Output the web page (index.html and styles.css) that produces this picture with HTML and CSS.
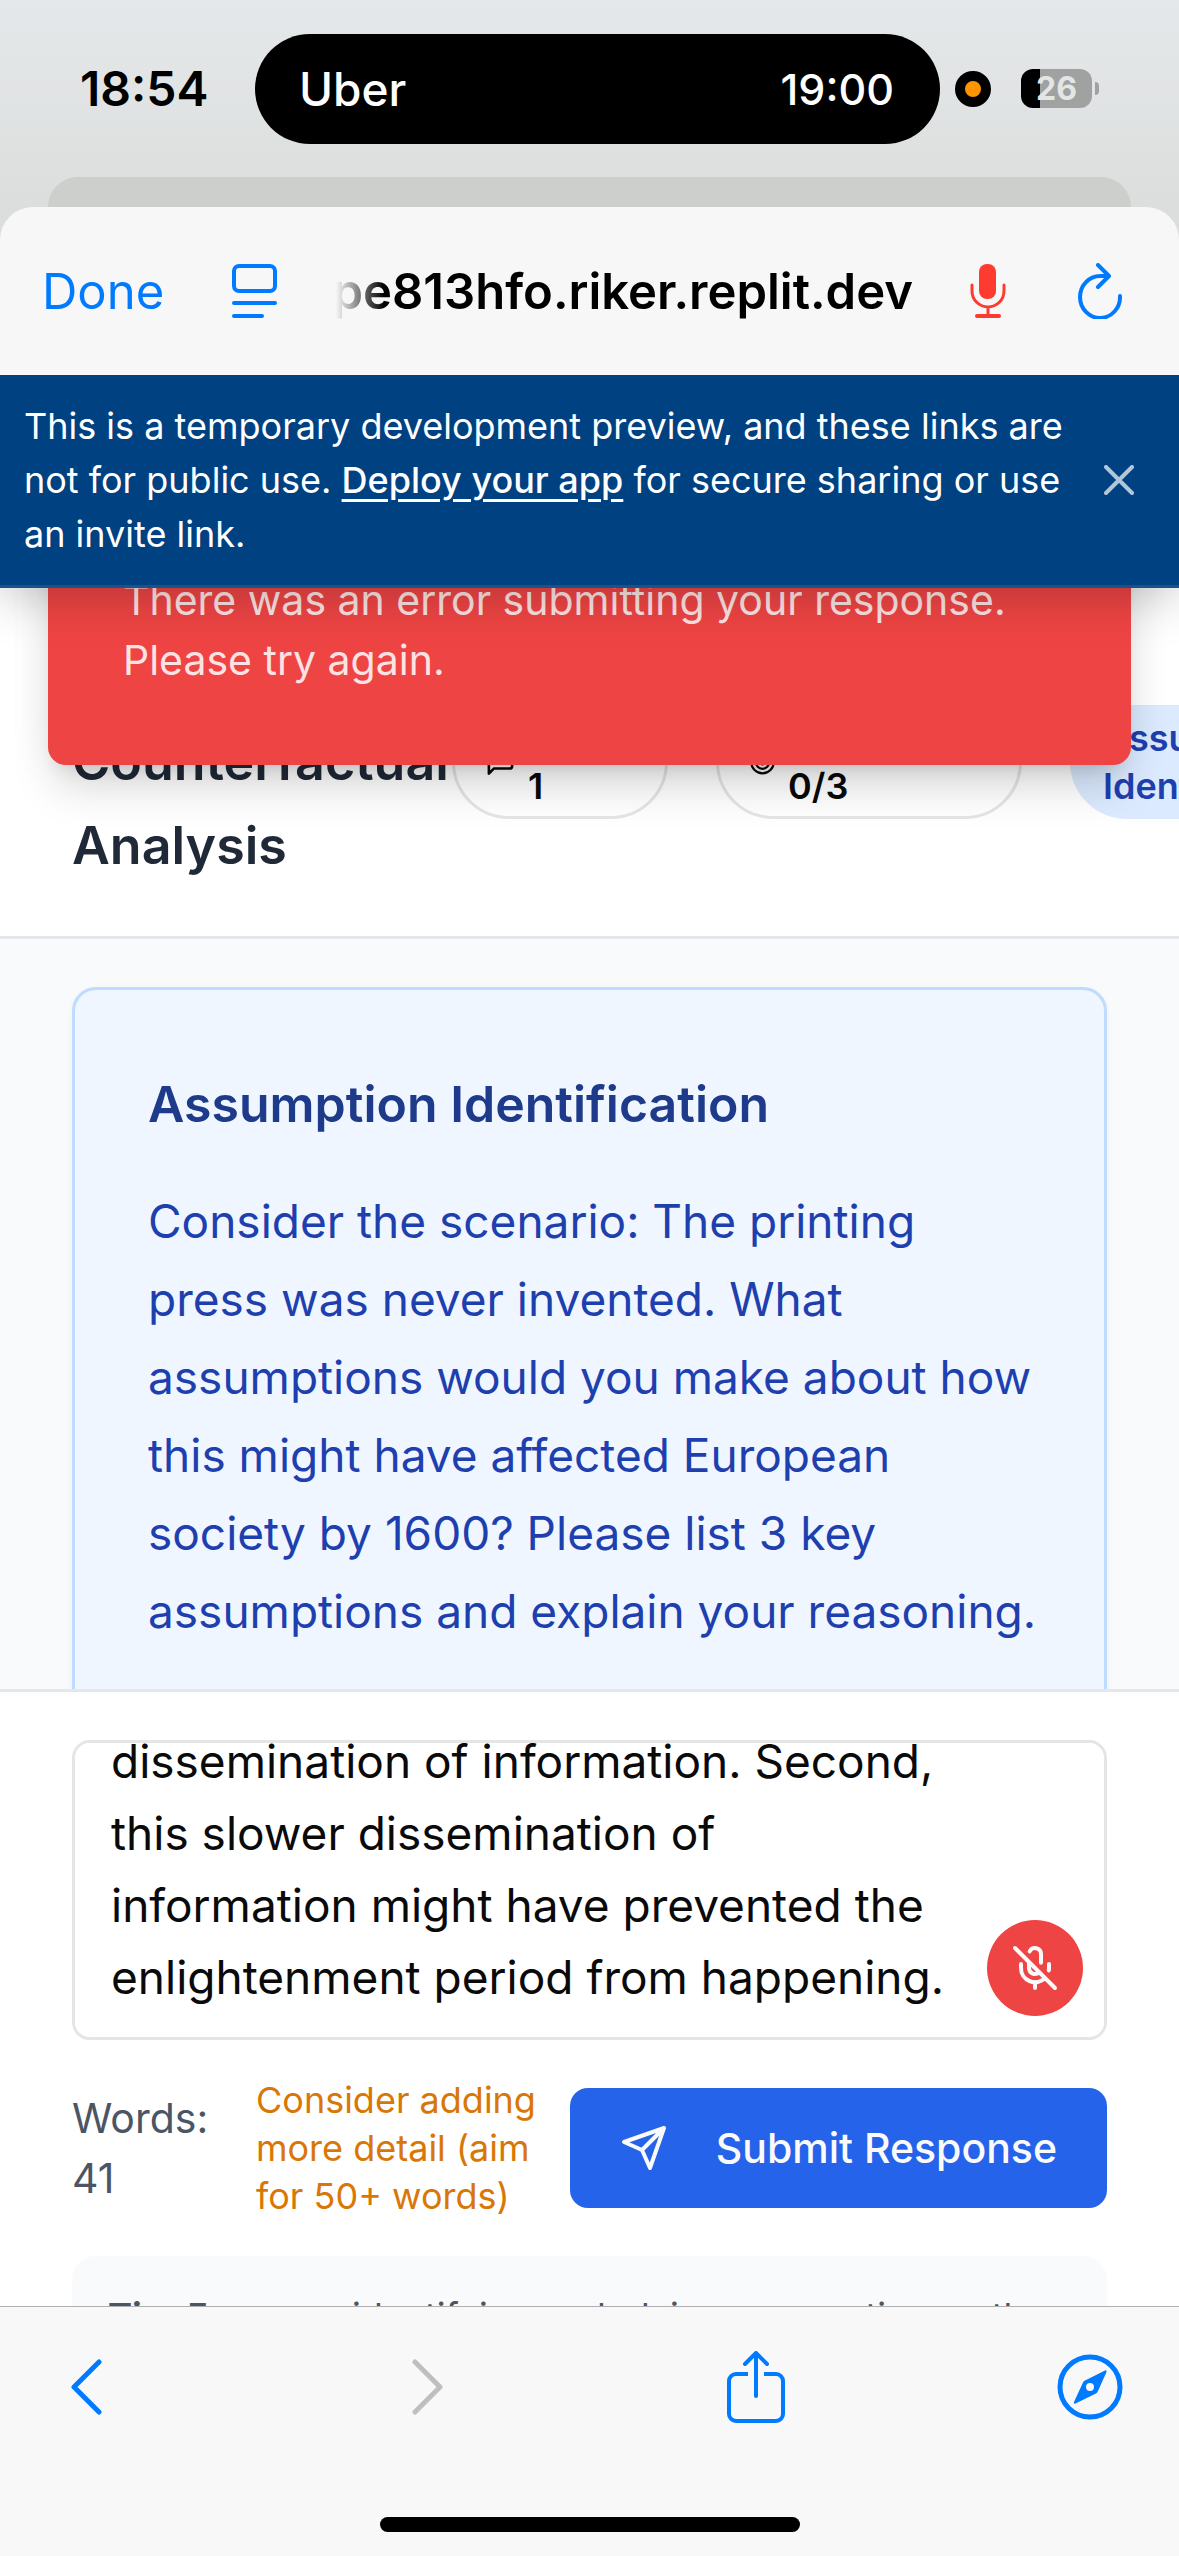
FILE: index.html
```html
<!DOCTYPE html>
<html lang="en">
<head>
<meta charset="utf-8">
<meta name="viewport" content="width=device-width, initial-scale=1">
<title>Counterfactual Analysis</title>
<link rel="stylesheet" href="styles.css">
</head>
<body>
<div class="status">
  <span class="clock">18:54</span>
  <div class="island"><span class="island-app">Uber</span><span class="island-eta">19:00</span></div>
  <span class="recording"></span>
  <span class="battery"><span class="battery-body">26</span><span class="battery-nub"></span></span>
</div>
<div class="peek"></div>
<div class="sheet">
  <header class="browser-bar">
    <button class="link-button">Done</button>
    <button class="icon-button reader" aria-label="Page menu">
      <svg width="45" height="54" viewBox="0 0 45 54" fill="none" stroke="currentColor" stroke-width="4" stroke-linecap="round"><rect x="2" y="2" width="41" height="25" rx="5"/><path d="M2 39H43M2 52H30"/></svg>
    </button>
    <div class="address"><span>pe813hfo.riker.replit.dev</span></div>
    <button class="icon-button mic-active" aria-label="Microphone in use">
      <svg width="36" height="54" viewBox="0 0 36 54" fill="none" stroke="currentColor" stroke-width="3" stroke-linecap="round"><rect x="9" y="0" width="17" height="35" rx="8" fill="currentColor" stroke="none"/><path d="M2 21v6a16 16 0 0 0 32 0v-6M18 43v8"/><path stroke-width="4" d="M7 52H29"/></svg>
    </button>
    <button class="icon-button" aria-label="Reload">
      <svg width="46" height="56" viewBox="0 0 46 56" fill="none" stroke="currentColor" stroke-width="4" stroke-linecap="round" stroke-linejoin="round"><path d="M43 33A20 21 0 1 1 23 13H32M21 2L32 13L21 24"/></svg>
    </button>
  </header>

  <div class="page">
    <div class="preview-banner">
      <p>This is a temporary development preview, and these links are not for public use. <a href="#deploy">Deploy your app</a> for secure sharing or use an invite link.</p>
      <button class="icon-button banner-close" aria-label="Dismiss">
        <svg width="30" height="30" viewBox="0 0 30 30" fill="none" stroke="currentColor" stroke-width="4" stroke-linecap="round"><path d="M2 2L28 28M28 2L2 28"/></svg>
      </button>
    </div>
    <div class="toast" role="alert">There was an error submitting your response. Please try again.</div>

    <div class="app-header">
      <h1>Counterfactual Analysis</h1>
      <div class="badges">
        <span class="badge badge-round">
          <svg width="31" height="36" viewBox="0 0 24 24" fill="none" stroke="currentColor" stroke-width="2" stroke-linecap="round" stroke-linejoin="round"><path d="M21 15a2 2 0 0 1-2 2H7l-4 4V5a2 2 0 0 1 2-2h14a2 2 0 0 1 2 2z"/></svg>
          <span class="badge-value">1</span>
        </span>
        <span class="badge badge-score">
          <svg width="27" height="36" viewBox="0 0 24 24" fill="none" stroke="currentColor" stroke-width="2"><circle cx="12" cy="12" r="10"/><circle cx="12" cy="12" r="6"/><circle cx="12" cy="12" r="2"/></svg>
          <span class="badge-value">0/3</span>
        </span>
        <span class="badge badge-stage">Assumption<br>Identification</span>
      </div>
    </div>

    <main class="content">
      <section class="prompt">
        <h2>Assumption Identification</h2>
        <p>Consider the scenario: The printing press was never invented. What assumptions would you make about how this might have affected European society by 1600? Please list 3 key assumptions and explain your reasoning.</p>
      </section>
    </main>

    <form class="composer">
      <div class="field">
        <textarea id="response" aria-label="Your response">dissemination of information. Second, this slower dissemination of information might have prevented the enlightenment period from happening.</textarea>
        <button type="button" class="mic-button" aria-label="Stop dictation">
          <svg width="48" height="48" viewBox="0 0 24 24" fill="none" stroke="currentColor" stroke-width="2" stroke-linecap="round" stroke-linejoin="round"><path d="M2 2l20 20M18.89 13.23A7.12 7.12 0 0 0 19 12v-2M5 10v2a7 7 0 0 0 12 5M15 9.34V5a3 3 0 0 0-5.68-1.33M9 9v3a3 3 0 0 0 5.12 2.12M12 19v3"/></svg>
        </button>
      </div>
      <div class="actions">
        <span class="count">Words: 41</span>
        <span class="hint">Consider adding more detail (aim for 50+ words)</span>
        <button type="button" class="submit">
          <svg width="48" height="48" viewBox="0 0 24 24" fill="none" stroke="currentColor" stroke-width="2" stroke-linecap="round" stroke-linejoin="round"><path d="M22 2L15 22L11 13L2 9ZM22 2L11 13"/></svg>
          Submit Response
        </button>
      </div>
      <p class="tip"><strong>Tip:</strong> Focus on identifying underlying assumptions rather</p>
    </form>
  </div>
</div>

<nav class="toolbar">
  <div class="tools">
    <button class="icon-button back" aria-label="Back">
      <svg width="32" height="56" viewBox="0 0 32 56" fill="none" stroke="currentColor" stroke-width="5" stroke-linecap="round" stroke-linejoin="round"><path d="M29 3L4 28L29 53"/></svg>
    </button>
    <button class="icon-button forward" aria-label="Forward" disabled>
      <svg width="32" height="56" viewBox="0 0 32 56" fill="none" stroke="currentColor" stroke-width="5" stroke-linecap="round" stroke-linejoin="round"><path d="M3 3L28 28L3 53"/></svg>
    </button>
    <button class="icon-button" aria-label="Share">
      <svg width="58" height="72" viewBox="0 0 58 72" fill="none" stroke="currentColor" stroke-width="4" stroke-linecap="round" stroke-linejoin="round"><path d="M29 45V2M18 13L29 2L40 13"/><path stroke-linecap="butt" d="M21 23H9a7 7 0 0 0-7 7V63a7 7 0 0 0 7 7H49a7 7 0 0 0 7-7V30a7 7 0 0 0-7-7H37"/></svg>
    </button>
    <button class="icon-button" aria-label="Open in Safari">
      <svg width="66" height="66" viewBox="0 0 66 66" fill="none"><circle cx="33" cy="33" r="30" stroke="currentColor" stroke-width="5"/><path fill="currentColor" fill-rule="evenodd" d="M48 16.500q2-.7 1.500 1.500L41 37q-.6 1.500-2 2.500L18.500 49.500q-2.200.8-1.500-1.500L26 28.500q.6-1.300 2-2zM33 29a4 4 0 1 0 0 8 4 4 0 0 0 0-8z"/></svg>
    </button>
  </div>
  <div class="home-indicator"></div>
</nav>
<script>
  // Keep the end of a long answer in view.
  const response = document.getElementById('response');
  response.scrollTop = response.scrollHeight;
</script>
</body>
</html>
```
FILE: styles.css
```css
* { box-sizing: border-box; }

body {
  margin: 0;
  height: 100vh;
  overflow: hidden;
  display: flex;
  flex-direction: column;
  background: linear-gradient(#e5e8ea, #dcdedd 207px);
  font-family: Inter, "Liberation Sans", sans-serif;
  font-size: 46px;
  color: #0a0a0a;
}

h1, h2, p { margin: 0; }

button {
  margin: 0;
  padding: 0;
  border: 0;
  background: none;
  font: inherit;
  color: inherit;
}

svg { display: block; flex: none; }

.icon-button { display: flex; flex: none; color: #007aff; }
.icon-button:disabled { color: #bfbfbf; }

/* Status bar */
.status {
  flex: none;
  display: flex;
  align-items: center;
  height: 177px;
  padding: 0 80px;
  color: #000;
}

.clock { width: 175px; font-size: 48px; font-weight: 600; }

.island {
  flex: 1;
  display: flex;
  align-items: center;
  justify-content: space-between;
  height: 110px;
  padding: 0 46px 0 44px;
  border-radius: 55px;
  background: #000;
  color: #fff;
}

.island-app { font-weight: 500; }
.island-eta { font-size: 43px; font-weight: 500; }

.recording {
  width: 36px;
  height: 36px;
  margin: 0 30px 0 15px;
  border: 10px solid #000;
  border-radius: 50%;
  background: #ff9500;
}

.battery { display: flex; align-items: center; gap: 3px; }

.battery-body {
  width: 71px;
  height: 39px;
  border-radius: 12px;
  background: linear-gradient(90deg, #000 19px, #a0a2a1 19px);
  color: #e4e6e6;
  font-size: 32px;
  font-weight: 700;
  line-height: 39px;
  text-align: center;
}

.battery-nub {
  width: 4px;
  height: 13px;
  border-radius: 0 6px 6px 0;
  background: #a0a2a1;
}

.peek {
  flex: none;
  height: 60px;
  margin: 0 48px -30px;
  border-radius: 30px 30px 0 0;
  background: #cdcfcc;
}

/* Browser sheet */
.sheet {
  flex: 1;
  min-height: 0;
  display: flex;
  flex-direction: column;
  overflow: hidden;
  border-radius: 33px 33px 0 0;
  background: #f7f7f7;
}

.browser-bar {
  flex: none;
  display: flex;
  align-items: center;
  height: 168px;
  padding: 0 56px 0 42px;
  font-size: 49px;
}

.link-button { color: #007aff; }
.reader { margin: 0 59px 0 68px; }

.address {
  flex: 1;
  min-width: 0;
  display: flex;
  justify-content: flex-end;
  overflow: hidden;
  color: #000;
  font-weight: 600;
  white-space: nowrap;
  mask-image: linear-gradient(90deg, transparent, #000 48px);
}

.mic-active { margin: 0 71px 0 57px; color: #ff3b30; }

.page {
  position: relative;
  flex: 1;
  min-height: 0;
  display: flex;
  flex-direction: column;
  overflow: hidden;
  background: #f8fafc;
}

.preview-banner {
  position: relative;
  z-index: 3;
  flex: none;
  display: flex;
  align-items: center;
  justify-content: space-between;
  padding: 24px 45px 24px 24px;
  border-bottom: 3px solid #1a528c;
  background: #004182;
  box-shadow: 0 6px 48px rgba(0, 0, 0, .25);
  color: #fff;
  font-size: 36px;
  line-height: 54px;
}

.preview-banner p { flex: 0 1 1056px; }
.preview-banner a { color: inherit; font-weight: 500; text-underline-offset: 6px; text-decoration-thickness: 3px; }
.banner-close { color: #b2c6da; }

.toast {
  position: absolute;
  z-index: 2;
  top: 48px;
  left: 48px;
  right: 48px;
  padding: 147px 75px 75px;
  border-radius: 18px;
  background: #ef4444;
  box-shadow: 0 30px 45px -9px rgba(0, 0, 0, .15), 0 12px 18px -12px rgba(0, 0, 0, .15), 0 0 48px rgba(0, 0, 0, .06);
  color: #fce3e3;
  font-size: 41px;
  line-height: 60px;
}

/* Exercise header */
.app-header {
  flex: none;
  display: flex;
  align-items: center;
  padding: 48px 72px;
  border-bottom: 3px solid #e5e7eb;
  background: #fff;
  overflow: hidden;
}

.app-header h1 {
  flex: none;
  width: 380px;
  padding-top: 84px;
  color: #1f2937;
  font-size: 52px;
  font-weight: 600;
  line-height: 84px;
}

.badges { flex: none; display: flex; gap: 48px; }

.badge {
  flex: none;
  display: flex;
  align-items: center;
  gap: 12px;
  height: 114px;
  padding: 0 30px;
  border: 3px solid #e5e5e5;
  border-radius: 57px;
  font-size: 36px;
  font-weight: 600;
  line-height: 48px;
}

.badge-round { width: 216px; }
.badge-score { width: 306px; }
.badge-value { align-self: flex-end; padding-bottom: 6px; }
.badge-stage { border-color: #dbeafe; background: #dbeafe; color: #1e40af; }

.content {
  flex: 1;
  min-height: 0;
  overflow: hidden;
  padding: 48px 72px;
}

.prompt {
  padding: 72px 60px 96px 73px;
  border: 3px solid #bfdbfe;
  border-radius: 24px;
  background: #eff6ff;
  box-shadow: 0 3px 6px rgba(0, 0, 0, .05);
  color: #1e40af;
}

.prompt h2 {
  margin-bottom: 36px;
  color: #1e3a8a;
  font-size: 50px;
  font-weight: 600;
  line-height: 84px;
}

.prompt p { line-height: 78px; }

/* Answer form */
.composer {
  flex: none;
  display: flex;
  flex-direction: column;
  gap: 36px;
  padding: 48px 72px 0;
  border-top: 3px solid #e5e7eb;
  background: #fff;
}

.field { position: relative; display: flex; }

.field textarea {
  flex: 1;
  height: 300px;
  padding: 24px 144px 24px 36px;
  border: 3px solid #e5e5e5;
  border-radius: 18px;
  background: #fff;
  color: #0a0a0a;
  font: inherit;
  line-height: 72px;
  resize: none;
  scrollbar-width: none;
}

.mic-button {
  position: absolute;
  right: 24px;
  bottom: 24px;
  display: grid;
  place-items: center;
  width: 96px;
  height: 96px;
  border-radius: 50%;
  background: #ef4444;
  color: #fafafa;
}

.actions { display: flex; align-items: center; }

.count {
  width: 184px;
  padding-right: 24px;
  color: #4b5563;
  font-size: 41px;
  line-height: 60px;
}

.hint {
  flex: 1;
  color: #d97706;
  font-size: 36px;
  line-height: 48px;
}

.submit {
  flex: none;
  display: flex;
  align-items: center;
  gap: 48px;
  height: 120px;
  padding: 0 50px;
  border-radius: 18px;
  background: #2563eb;
  color: #fafafa;
  font-size: 41px;
  font-weight: 500;
}

.tip {
  padding: 36px;
  border-radius: 24px;
  background: #f9fafb;
  color: #4b5563;
  font-size: 36px;
  line-height: 48px;
}

/* Bottom browser toolbar, laid over the end of the page */
.toolbar {
  position: relative;
  z-index: 4;
  flex: none;
  display: flex;
  flex-direction: column;
  align-items: center;
  justify-content: space-between;
  height: 250px;
  margin-top: -70px;
  padding: 44px 0 24px;
  border-top: 1px solid #b0b0b0;
  background: #f8f8f8;
}

.tools {
  align-self: stretch;
  display: flex;
  align-items: center;
  justify-content: space-between;
  padding: 0 56px 0 70px;
}

.back { width: 70px; }
.forward { width: 44px; }

.home-indicator {
  width: 420px;
  height: 15px;
  border-radius: 8px;
  background: #000;
}
```
